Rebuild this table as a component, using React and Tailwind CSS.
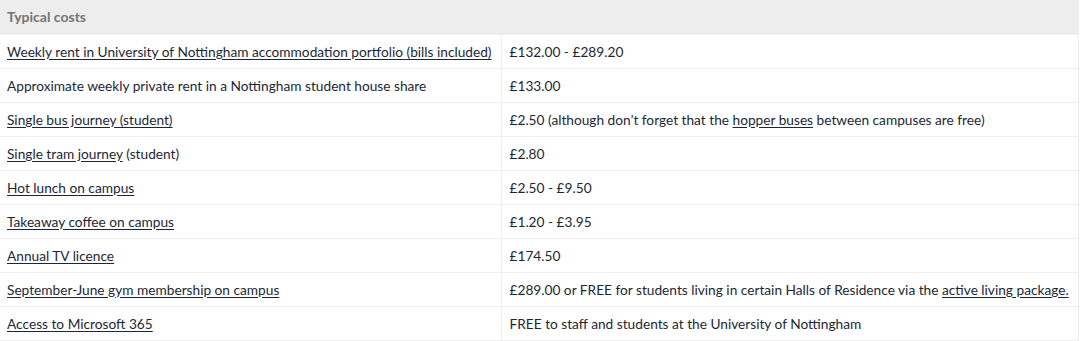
const rows = [
  {
    item: <a href="#" className="underline">Weekly rent in University of Nottingham accommodation portfolio (bills included)</a>,
    cost: '£132.00 - £289.20',
  },
  {
    item: 'Approximate weekly private rent in a Nottingham student house share',
    cost: '£133.00',
  },
  {
    item: <a href="#" className="underline">Single bus journey (student)</a>,
    cost: (
      <>
        £2.50 (although don’t forget that the <a href="#" className="underline">hopper buses</a> between campuses are free)
      </>
    ),
  },
  {
    item: (
      <>
        <a href="#" className="underline">Single tram journey</a> (student)
      </>
    ),
    cost: '£2.80',
  },
  { item: <a href="#" className="underline">Hot lunch on campus</a>, cost: '£2.50 - £9.50' },
  { item: <a href="#" className="underline">Takeaway coffee on campus</a>, cost: '£1.20 - £3.95' },
  { item: <a href="#" className="underline">Annual TV licence</a>, cost: '£174.50' },
  {
    item: <a href="#" className="underline">September-June gym membership on campus </a>,
    cost: (
      <>
        £289.00 or FREE for students living in certain Halls of Residence via the{' '}
        <a href="#" className="underline">active living package.</a>
      </>
    ),
  },
  { item: <a href="#" className="underline">Access to Microsoft 365</a>, cost: 'FREE to staff and students at the University of Nottingham' },
];

export default function App() {
  return (
    <div className="w-[1080px] bg-white font-['Lato','Open_Sans',sans-serif] text-[13.7px] text-[#1c2736]">
      <table className="w-[1079px] border-collapse border-r border-b border-[#eeeeee]">
        <thead>
          <tr className="h-[34px] bg-[#ededed]">
            <th colSpan={2} className="px-[7px] text-left text-[14px] font-bold text-[#757575]">
              Typical costs
            </th>
          </tr>
        </thead>
        <tbody>
          {rows.map((r, i) => (
            <tr key={i} className="h-[34px] border-t border-[#eeeeee]">
              <td className="w-[501px] border-r border-[#eeeeee] px-[7px] pt-[2px] align-middle [&_a]:underline-offset-2">
                {r.item}
              </td>
              <td className="px-[8px] pt-[2px] align-middle [&_a]:underline-offset-2">{r.cost}</td>
            </tr>
          ))}
        </tbody>
      </table>
    </div>
  );
}
